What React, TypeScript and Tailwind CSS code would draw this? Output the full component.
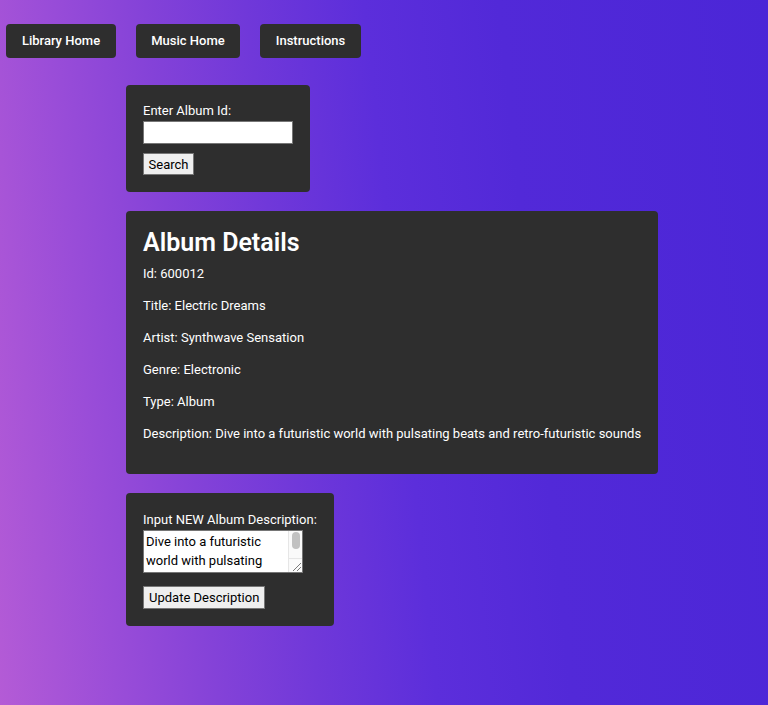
import { useState } from "react";

const font = { fontFamily: "Roboto, 'Noto Sans', sans-serif" };

const album = {
  id: "600012",
  title: "Electric Dreams",
  artist: "Synthwave Sensation",
  genre: "Electronic",
  type: "Album",
  description:
    "Dive into a futuristic world with pulsating beats and retro-futuristic sounds",
};

function NavButton({ label, width }: { label: string; width: string }) {
  return (
    <button
      className={`${width} h-[34px] rounded-[4px] bg-[#2e2e2e] text-[13px] font-medium text-white`}
    >
      {label}
    </button>
  );
}

export default function App() {
  const [albumId, setAlbumId] = useState("");
  const [desc, setDesc] = useState(album.description);

  return (
    <div
      className="min-h-[705px] w-full bg-[linear-gradient(84deg,#b45bd6_0%,#9a4dd8_14%,#8442d8_26%,#7038d9_38%,#5c2edb_52%,#5229d8_68%,#4b26d7_100%)] pt-[24px] text-white"
      style={font}
    >
      <nav className="ml-[6px] flex gap-[20px]">
        <NavButton label="Library Home" width="w-[110px]" />
        <NavButton label="Music Home" width="w-[104px]" />
        <NavButton label="Instructions" width="w-[101px]" />
      </nav>

      <div className="ml-[126px] mt-[27px] flex flex-col items-start gap-[19px]">
        {/* search */}
        <div className="rounded-[4px] bg-[#2e2e2e] px-[17px] pb-[17px] pt-[18px]">
          <label className="block text-[13px] leading-[16px]">Enter Album Id:</label>
          <input
            value={albumId}
            onChange={(e) => setAlbumId(e.target.value)}
            className="mt-[2px] block h-[23px] w-[150px] border border-[#767676] bg-white px-1 text-[13px] text-black outline-none"
          />
          <button className="mt-[9px] block h-[22px] w-[51px] border border-[#767676] bg-[#efefef] text-[13px] leading-none text-black">
            Search
          </button>
        </div>

        {/* details */}
        <div className="rounded-[4px] bg-[#2e2e2e] px-[17px] pb-[32px] pt-[17px]">
          <h2 className="text-[25px] font-semibold leading-[30px]">Album Details</h2>
          <div className="mt-[8px] flex flex-col gap-[16px] text-[13px] leading-[16px]">
            <p>Id: {album.id}</p>
            <p>Title: {album.title}</p>
            <p>Artist: {album.artist}</p>
            <p>Genre: {album.genre}</p>
            <p>Type: {album.type}</p>
            <p>Description: {album.description}</p>
          </div>
        </div>

        {/* update */}
        <div className="rounded-[4px] bg-[#2e2e2e] px-[17px] pb-[17px] pt-[19px]">
          <label className="block text-[13px] leading-[16px]">
            Input NEW Album Description:
          </label>
          <div className="relative mt-[2px] h-[43px] w-[160px]">
            <textarea
              value={desc}
              onChange={(e) => setDesc(e.target.value)}
              className="block h-full w-full resize-none overflow-hidden border border-[#767676] bg-white py-[1px] pl-[2px] pr-[17px] text-[13px] leading-[19px] text-black outline-none"
            />
            {/* scrollbar */}
            <div className="pointer-events-none absolute bottom-[1px] right-[1px] top-[1px] flex w-[14px] flex-col border-l border-[#e6e6e6] bg-[#fafafa]">
              <div className="mx-auto mt-[1px] h-[17px] w-[8px] rounded-full bg-[#c1c1c1]" />
              <div className="mt-auto h-[14px] border-t border-[#e6e6e6]">
                <svg width="13" height="13" viewBox="0 0 13 13">
                  <path d="M12 4 L4 12 M12 8 L8 12" stroke="#7a7a7a" strokeWidth="1" />
                </svg>
              </div>
            </div>
          </div>
          <button className="mt-[13px] block h-[23px] border border-[#767676] bg-[#efefef] px-[5px] text-[13px] leading-none text-black">
            Update Description
          </button>
        </div>
      </div>
    </div>
  );
}
